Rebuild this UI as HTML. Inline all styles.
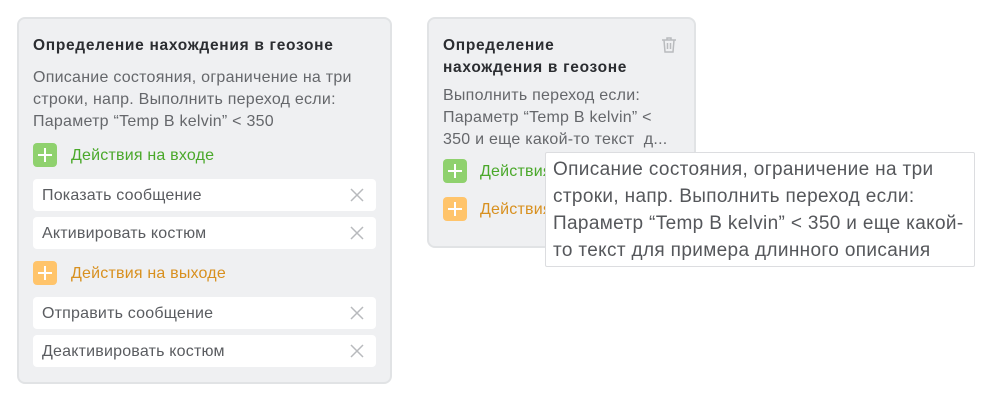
<!DOCTYPE html>
<html><head><meta charset="utf-8"><style>
*{box-sizing:border-box;margin:0;padding:0}
body{width:1001px;height:401px;background:#fff;font-family:"Liberation Sans",sans-serif;position:relative;overflow:hidden}
.card{position:absolute;background:#eff0f2;border:2px solid #e1e3e5;border-radius:8px}
.a{position:absolute;white-space:nowrap}
.t{font-size:15.5px;font-weight:bold;color:#2b2d31;line-height:22px;letter-spacing:0.7px}
.d{font-size:16px;color:#65676b;line-height:22px;letter-spacing:0.25px}
.ic{position:absolute;width:24px;height:24px;border-radius:4px}
.ic:before{content:"";position:absolute;left:5px;top:11px;width:14px;height:2px;background:#fff}
.ic:after{content:"";position:absolute;left:11px;top:5px;width:2px;height:14px;background:#fff}
.g{background:#8fd16e}.o{background:#ffc46b}
.hg{font-size:16px;color:#4aa82a;letter-spacing:0.2px}.ho{font-size:16px;color:#d8901f;letter-spacing:0.2px}
.it{position:absolute;left:33px;width:343px;height:32px;background:#fff;border-radius:4px;font-size:16px;color:#5a5c60;line-height:32px;padding:1px 0 0 9px;letter-spacing:0.2px}
.it svg{position:absolute;right:12px;top:9px}
.tip{position:absolute;left:545px;top:152px;width:430px;height:115px;background:#fff;border:1px solid #dcdde0;border-radius:2px;font-size:19px;line-height:27px;color:#55575b;padding:3px 0 0 7px;letter-spacing:0.35px;white-space:nowrap}
</style></head><body>
<div class="card" style="left:17px;top:17px;width:375px;height:367px"></div>
<div class="a t" style="left:33px;top:35px">Определение нахождения в геозоне</div>
<div class="a d" style="left:33px;top:67px">Описание состояния, ограничение на три<br>строки, напр. Выполнить переход если:<br>Параметр “Temp B kelvin” &lt; 350</div>
<div class="ic g" style="left:33px;top:143px"></div>
<div class="a hg" style="left:71px;top:147px">Действия на входе</div>
<div class="it" style="top:179px">Показать сообщение<svg width="14" height="14"><path d="M1 1L13 13M13 1L1 13" stroke="#b8babd" stroke-width="1.5"/></svg></div>
<div class="it" style="top:217px">Активировать костюм<svg width="14" height="14"><path d="M1 1L13 13M13 1L1 13" stroke="#b8babd" stroke-width="1.5"/></svg></div>
<div class="ic o" style="left:33px;top:261px"></div>
<div class="a ho" style="left:71px;top:265px">Действия на выходе</div>
<div class="it" style="top:297px">Отправить сообщение<svg width="14" height="14"><path d="M1 1L13 13M13 1L1 13" stroke="#b8babd" stroke-width="1.5"/></svg></div>
<div class="it" style="top:335px">Деактивировать костюм<svg width="14" height="14"><path d="M1 1L13 13M13 1L1 13" stroke="#b8babd" stroke-width="1.5"/></svg></div>

<div class="card" style="left:427px;top:17px;width:269px;height:231px"></div>
<div class="a t" style="left:443px;top:35px">Определение<br>нахождения в геозоне</div>
<svg class="a" style="left:660px;top:36px" width="18" height="18" viewBox="0 0 18 18"><path d="M2 4H16M7 4V2H11V4M4 4L5 16H13L14 4M7.5 7V13M10.5 7V13" fill="none" stroke="#b9bbbe" stroke-width="1.5"/></svg>
<div class="a d" style="left:443px;top:85px">Выполнить переход если:<br>Параметр “Temp B kelvin” &lt;<br>350 и еще какой-то текст&nbsp; д...</div>
<div class="ic g" style="left:443px;top:159px"></div>
<div class="a hg" style="left:480px;top:163px">Действия</div>
<div class="ic o" style="left:443px;top:197px"></div>
<div class="a ho" style="left:480px;top:201px">Действия</div>
<div class="tip">Описание состояния, ограничение на три<br>строки, напр. Выполнить переход если:<br>Параметр “Temp B kelvin” &lt; 350 и еще какой-<br>то текст для примера длинного описания</div>
</body></html>
